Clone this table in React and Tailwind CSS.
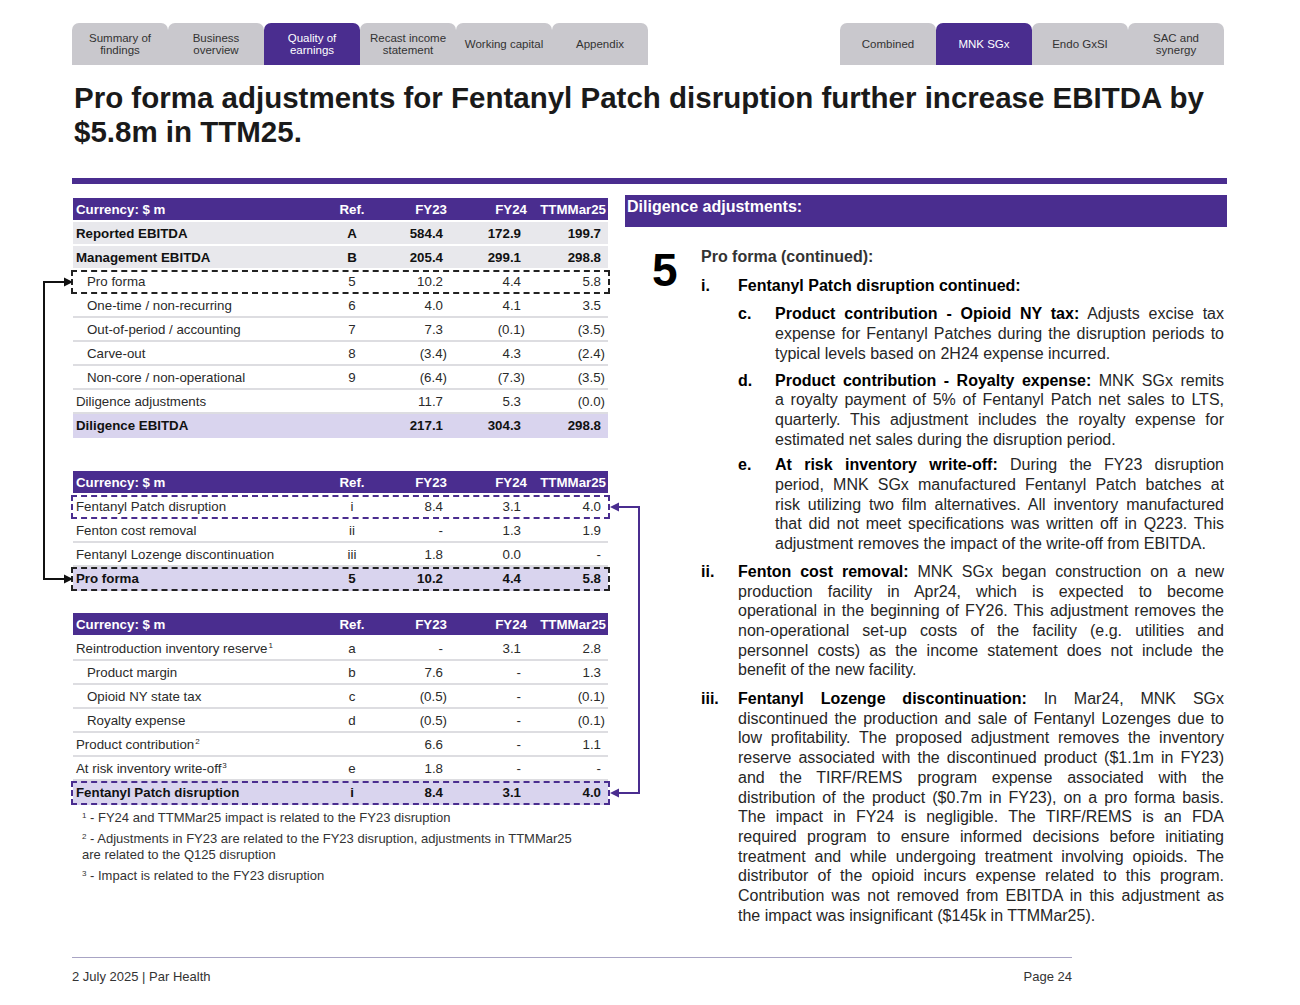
import React from 'react';

const leftTabs = [
  { l: ['Summary of', 'findings'] },
  { l: ['Business', 'overview'] },
  { l: ['Quality of', 'earnings'], active: true },
  { l: ['Recast income', 'statement'] },
  { l: ['Working capital'] },
  { l: ['Appendix'] },
];
const rightTabs = [
  { l: ['Combined'] },
  { l: ['MNK SGx'], active: true },
  { l: ['Endo GxSI'] },
  { l: ['SAC and', 'synergy'] },
];

function Tab({ t }) {
  return (
    <div
      className={`w-[96px] h-[42px] rounded-t-[7px] flex flex-col items-center justify-center text-center text-[11.5px] leading-[12px] ${
        t.active ? 'bg-[#4a2d8f] text-white' : 'bg-[#c9c8cd] text-[#333]'
      }`}
    >
      {t.l.map((x, i) => (
        <div key={i}>{x}</div>
      ))}
    </div>
  );
}

const padFor = (col, v) => {
  const paren = v.endsWith(')');
  if (col === 0) return paren ? 'pr-[1px]' : 'pr-[5px]';
  return paren ? 'pr-[3px]' : 'pr-[7px]';
};

function Header() {
  return (
    <div className="grid grid-cols-[243px_72px_60px_80px_80px] h-[24px] pt-[2px] items-center text-[13.3px] font-bold text-white bg-[#4a2d8f] border-b-2 border-white">
      <div className="pl-[3px]">Currency: $ m</div>
      <div className="text-center">Ref.</div>
      <div className="text-right pr-[1px]">FY23</div>
      <div className="text-right pr-[1px]">FY24</div>
      <div className="text-right pr-[2px]">TTMMar25</div>
    </div>
  );
}

function Row({ r }) {
  const { label, refv = '', vals, bold, indent, kind, dash, sup } = r;
  let bg = '';
  if (kind === 'gray') bg = 'bg-[#e8e8ec] border-b-2 border-white pt-[2px]';
  else if (kind === 'lav') bg = 'bg-[#d9d4ee]';
  else if (!dash) bg = 'border-b-2 border-[#dddde1] pt-[2px]';
  return (
    <div
      className={`relative grid grid-cols-[243px_72px_60px_80px_80px] h-[24px] items-center text-[13.3px] ${
        bold ? 'font-bold text-[#111]' : 'text-[#2a2a2a]'
      } ${bg}`}
    >
      <div className={indent ? 'pl-[14px]' : 'pl-[3px]'}>
        {label}
        {sup && <span className="relative -top-[5px] text-[8px] leading-none ml-[1px]">{sup}</span>}
      </div>
      <div className="text-center">{refv}</div>
      {vals.map((v, i) => (
        <div key={i} className={`text-right ${padFor(i, v)}`}>
          {v}
        </div>
      ))}
      {dash === 'black' && (
        <div className="absolute -left-[2px] -right-[2px] top-0 bottom-0 border-2 border-dashed border-[#222] pointer-events-none" />
      )}
      {dash === 'purple' && (
        <div className="absolute -left-[2px] -right-[2px] top-0 bottom-0 border-2 border-dashed border-[#4a2d8f] pointer-events-none" />
      )}
    </div>
  );
}

function Table({ rows, className = '' }) {
  return (
    <div className={`w-[535px] ${className}`}>
      <Header />
      {rows.map((r, i) => (
        <Row key={i} r={r} />
      ))}
    </div>
  );
}

const t1 = [
  { label: 'Reported EBITDA', refv: 'A', vals: ['584.4', '172.9', '199.7'], bold: true, kind: 'gray' },
  { label: 'Management EBITDA', refv: 'B', vals: ['205.4', '299.1', '298.8'], bold: true, kind: 'gray' },
  { label: 'Pro forma', refv: '5', vals: ['10.2', '4.4', '5.8'], indent: true, dash: 'black' },
  { label: 'One-time / non-recurring', refv: '6', vals: ['4.0', '4.1', '3.5'], indent: true },
  { label: 'Out-of-period / accounting', refv: '7', vals: ['7.3', '(0.1)', '(3.5)'], indent: true },
  { label: 'Carve-out', refv: '8', vals: ['(3.4)', '4.3', '(2.4)'], indent: true },
  { label: 'Non-core / non-operational', refv: '9', vals: ['(6.4)', '(7.3)', '(3.5)'], indent: true },
  { label: 'Diligence adjustments', vals: ['11.7', '5.3', '(0.0)'] },
  { label: 'Diligence EBITDA', vals: ['217.1', '304.3', '298.8'], bold: true, kind: 'lav' },
];

const t2 = [
  { label: 'Fentanyl Patch disruption', refv: 'i', vals: ['8.4', '3.1', '4.0'], dash: 'purple' },
  { label: 'Fenton cost removal', refv: 'ii', vals: ['-', '1.3', '1.9'] },
  { label: 'Fentanyl Lozenge discontinuation', refv: 'iii', vals: ['1.8', '0.0', '-'] },
  { label: 'Pro forma', refv: '5', vals: ['10.2', '4.4', '5.8'], bold: true, kind: 'lav', dash: 'black' },
];

const t3 = [
  { label: 'Reintroduction inventory reserve', sup: '1', refv: 'a', vals: ['-', '3.1', '2.8'] },
  { label: 'Product margin', refv: 'b', vals: ['7.6', '-', '1.3'], indent: true },
  { label: 'Opioid NY state tax', refv: 'c', vals: ['(0.5)', '-', '(0.1)'], indent: true },
  { label: 'Royalty expense', refv: 'd', vals: ['(0.5)', '-', '(0.1)'], indent: true },
  { label: 'Product contribution', sup: '2', vals: ['6.6', '-', '1.1'] },
  { label: 'At risk inventory write-off', sup: '3', refv: 'e', vals: ['1.8', '-', '-'] },
  { label: 'Fentanyl Patch disruption', refv: 'i', vals: ['8.4', '3.1', '4.0'], bold: true, kind: 'lav', dash: 'purple' },
];

function Item({ label, lines, className = '' }) {
  return (
    <div className={`flex ${className}`}>
      <div className="w-[37px] shrink-0 font-bold text-black">{label}</div>
      <div className="flex-1 min-w-0">
        {lines.map((l, i) => (
          <div
            key={i}
            className={i < lines.length - 1 ? 'text-justify [text-align-last:justify]' : ''}
          >
            {l}
          </div>
        ))}
      </div>
    </div>
  );
}

const B = ({ children }) => <span className="font-bold text-black">{children}</span>;

export default function App() {
  return (
    <div className="relative w-[1300px] h-[1005px] bg-white overflow-hidden font-['Liberation_Sans',Arial,sans-serif]">
      <div className="pl-[72px] pr-[73px] pt-[23px]">
        {/* Tabs */}
        <div className="flex">
          <div className="flex">
            {leftTabs.map((t, i) => (
              <Tab key={i} t={t} />
            ))}
          </div>
          <div className="flex ml-auto mr-[3px]">
            {rightTabs.map((t, i) => (
              <Tab key={i} t={t} />
            ))}
          </div>
        </div>

        {/* Title */}
        <h1 className="mt-[16px] pl-[2px] text-[29.5px] leading-[34px] font-bold text-[#1a1a1a]">
          Pro forma adjustments for Fentanyl Patch disruption further increase EBITDA by $5.8m in TTM25.
        </h1>
        <div className="mt-[29px] h-[6px] bg-[#4a2d8f]" />

        {/* Main */}
        <div className="flex h-[773px]">
          {/* Left */}
          <div className="w-[553px] pl-[1px] pt-[14px]">
            <Table rows={t1} />
            <Table rows={t2} className="mt-[33px]" />
            <Table rows={t3} className="mt-[22px]" />
            <div className="pl-[9px] mt-[5px] text-[13px] leading-[16px] text-[#333]">
              <p>
                <span className="relative -top-[4px] text-[8px] leading-none">1</span> - FY24 and TTMMar25 impact is related to the FY23 disruption
              </p>
              <p className="mt-[5px]">
                <span className="relative -top-[4px] text-[8px] leading-none">2</span> - Adjustments in FY23 are related to the FY23 disruption, adjustments in TTMMar25
                <br />
                are related to the Q125 disruption
              </p>
              <p className="mt-[5px]">
                <span className="relative -top-[4px] text-[8px] leading-none">3</span> - Impact is related to the FY23 disruption
              </p>
            </div>
          </div>

          {/* Right */}
          <div className="flex-1 pt-[11px]">
            <div className="h-[32px] bg-[#4a2d8f] text-white font-bold text-[16px] leading-[18px] pl-[2px] pt-[3px]">
              Diligence adjustments:
            </div>
            <div className="flex mt-[20px] pl-[27px] pr-[3px]">
              <div className="w-[49px] shrink-0 text-[46px] leading-[46px] font-bold text-black">5</div>
              <div className="flex-1 min-w-0 text-[16px] leading-[19.7px] text-[#262626]">
                <div className="font-bold text-[#333]">Pro forma (continued):</div>
                <Item className="mt-[9px]" label="i." lines={[<B>Fentanyl Patch disruption continued:</B>]} />
                <div className="pl-[37px] mt-[9px]">
                  <Item
                    label="c."
                    lines={[
                      <>
                        <B>Product contribution - Opioid NY tax:</B> Adjusts excise tax
                      </>,
                      'expense for Fentanyl Patches during the disruption periods to',
                      'typical levels based on 2H24 expense incurred.',
                    ]}
                  />
                  <Item
                    className="mt-[7px]"
                    label="d."
                    lines={[
                      <>
                        <B>Product contribution - Royalty expense:</B> MNK SGx remits
                      </>,
                      'a royalty payment of 5% of Fentanyl Patch net sales to LTS,',
                      'quarterly. This adjustment includes the royalty expense for',
                      'estimated net sales during the disruption period.',
                    ]}
                  />
                  <Item
                    className="mt-[6px]"
                    label="e."
                    lines={[
                      <>
                        <B>At risk inventory write-off:</B> During the FY23 disruption
                      </>,
                      'period, MNK SGx manufactured Fentanyl Patch batches at',
                      'risk utilizing two film alternatives. All inventory manufactured',
                      'that did not meet specifications was written off in Q223. This',
                      'adjustment removes the impact of the write-off from EBITDA.',
                    ]}
                  />
                </div>
                <Item
                  className="mt-[8px]"
                  label="ii."
                  lines={[
                    <>
                      <B>Fenton cost removal:</B> MNK SGx began construction on a new
                    </>,
                    'production facility in Apr24, which is expected to become',
                    'operational in the beginning of FY26. This adjustment removes the',
                    'non-operational set-up costs of the facility (e.g. utilities and',
                    'personnel costs) as the income statement does not include the',
                    'benefit of the new facility.',
                  ]}
                />
                <Item
                  className="mt-[9px]"
                  label="iii."
                  lines={[
                    <>
                      <B>Fentanyl Lozenge discontinuation:</B> In Mar24, MNK SGx
                    </>,
                    'discontinued the production and sale of Fentanyl Lozenges due to',
                    'low profitability. The proposed adjustment removes the inventory',
                    'reserve associated with the discontinued product ($1.1m in FY23)',
                    'and the TIRF/REMS program expense associated with the',
                    'distribution of the product ($0.7m in FY23), on a pro forma basis.',
                    'The impact in FY24 is negligible. The TIRF/REMS is an FDA',
                    'required program to ensure informed decisions before initiating',
                    'treatment and while undergoing treatment involving opioids. The',
                    'distributor of the opioid incurs expense related to this program.',
                    'Contribution was not removed from EBITDA in this adjustment as',
                    'the impact was insignificant ($145k in TTMMar25).',
                  ]}
                />
              </div>
            </div>
          </div>
        </div>

        {/* Footer */}
        <div className="w-[1000px] border-t border-[#a8a4c4]" />
        <div className="w-[1000px] mt-[11px] flex justify-between text-[13px] leading-[16px] text-[#333]">
          <span>2 July 2025 | Par Health</span>
          <span>Page 24</span>
        </div>
      </div>

      {/* Connector arrows */}
      <svg className="absolute top-0 left-0 pointer-events-none" width="1300" height="1005">
        <path d="M 66 282 H 44 V 579 H 66" fill="none" stroke="#111" strokeWidth="2" />
        <polygon points="73,282 64,277.5 64,286.5" fill="#111" />
        <polygon points="73,579 64,574.5 64,583.5" fill="#111" />
        <path d="M 617 507 H 639 V 793 H 617" fill="none" stroke="#4a2d8f" strokeWidth="2" />
        <polygon points="610,507 619,502.5 619,511.5" fill="#4a2d8f" />
        <polygon points="610,793 619,788.5 619,797.5" fill="#4a2d8f" />
      </svg>
    </div>
  );
}
